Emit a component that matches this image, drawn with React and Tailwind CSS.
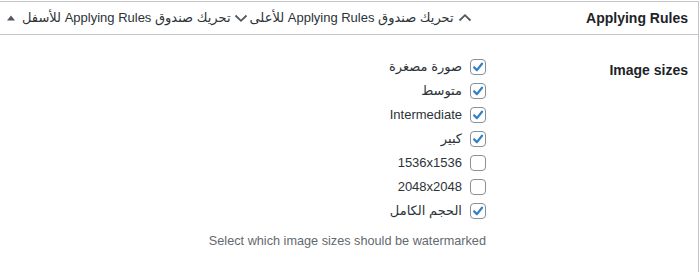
import React from "react";

const Check = ({ checked }) => (
  <span className="flex h-4 w-4 shrink-0 items-center justify-center rounded-[4px] border border-[#8c8f94] bg-white">
    {checked && (
      <svg width="14" height="14" viewBox="0 0 16 16">
        <path d="M3.6 8.4 L6.8 11.6 L12.6 4.2" fill="none" stroke="#3582c4" strokeWidth="2.6" strokeLinecap="round" strokeLinejoin="round" />
      </svg>
    )}
  </span>
);

const ChevronUp = () => (
  <svg width="14" height="10" viewBox="0 0 14 10" className="shrink-0">
    <path d="M1.5 7.5 L7 2.2 L12.5 7.5" fill="none" stroke="#50575e" strokeWidth="1.8" />
  </svg>
);
const ChevronDown = () => (
  <svg width="14" height="10" viewBox="0 0 14 10" className="shrink-0">
    <path d="M1.5 2.5 L7 7.8 L12.5 2.5" fill="none" stroke="#50575e" strokeWidth="1.8" />
  </svg>
);

const sizes = [
  ["صورة مصغرة", true],
  ["متوسط", true],
  ["Intermediate", true],
  ["كبير", true],
  ["1536x1536", false],
  ["2048x2048", false],
  ["الحجم الكامل", true],
];

export default function App() {
  return (
    <div
      dir="rtl"
      className="h-[272px] w-[700px] overflow-hidden bg-white pt-px pr-px"
      style={{ fontFamily: '"Liberation Sans", "DejaVu Sans", sans-serif' }}
    >
      <div className="h-[300px] border-t border-r border-[#c3c4c7] bg-white">
        <div className="flex h-[33px] items-center border-b border-[#c3c4c7]">
          <h2 className="flex-1 pr-[10px] text-[14px] font-bold text-[#1d2327]">Applying Rules</h2>
          <div className="flex items-center text-[13px] text-[#2c3338]">
            <div className="flex items-center gap-[4px] pl-[2px]">
              <ChevronUp />
              <span>تحريك صندوق Applying Rules للأعلى</span>
            </div>
            <div className="flex items-center gap-[3px]">
              <ChevronDown />
              <span>تحريك صندوق Applying Rules للأسفل</span>
            </div>
            <div className="flex w-[22px] items-center justify-center">
              <svg width="8" height="6" viewBox="0 0 8 6">
                <path d="M0 5.5 L4 0.5 L8 5.5 Z" fill="#50575e" />
              </svg>
            </div>
          </div>
        </div>
        <div className="flex">
          <div className="w-[212px] shrink-0 pr-[10px] pt-[23px]">
            <span className="text-[14px] font-bold leading-[20px] text-[#1d2327]">Image sizes</span>
          </div>
          <div className="pt-[20px]">
            {sizes.map(([label, checked]) => (
              <label key={label} className="flex h-6 items-center gap-[8px] text-[13px] text-[#2c3338]">
                <Check checked={checked} />
                <span>{label}</span>
              </label>
            ))}
            <p className="mt-[9px] text-[12.7px] leading-[18px] text-[#646970]">
              Select which image sizes should be watermarked
            </p>
          </div>
        </div>
      </div>
    </div>
  );
}
